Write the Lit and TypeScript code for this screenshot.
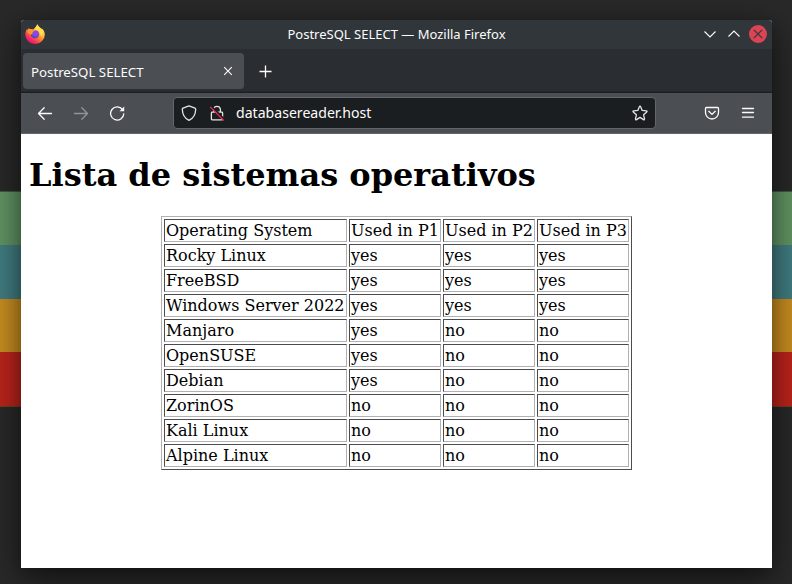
import { LitElement, html, css } from "lit";
import { customElement } from "lit/decorators.js";

const HEAD = ["Operating System", "Used in P1", "Used in P2", "Used in P3"];
const ROWS = [
  ["Rocky Linux", "yes", "yes", "yes"],
  ["FreeBSD", "yes", "yes", "yes"],
  ["Windows Server 2022", "yes", "yes", "yes"],
  ["Manjaro", "yes", "no", "no"],
  ["OpenSUSE", "yes", "no", "no"],
  ["Debian", "yes", "no", "no"],
  ["ZorinOS", "no", "no", "no"],
  ["Kali Linux", "no", "no", "no"],
  ["Alpine Linux", "no", "no", "no"],
];

@customElement("title-bar")
class TitleBar extends LitElement {
  static styles = css`
    :host { display: grid; grid-template-columns: 72px 1fr 72px; align-items: center; height: 29px; background: #31363b; color: #fcfcfc; font: 13px/29px "Noto Sans", sans-serif; border-radius: 3px 3px 0 0; }
    svg { display: block; fill: none; }
    .logo { margin: -2px 0 0 4px; }
    .title { text-align: center; white-space: nowrap; }
    .controls { display: flex; gap: 6px; margin: -1px 0 0 1px; }
  `;
  render() {
    return html`
      <svg class="logo" width="20" height="20" viewBox="0 0 20 20">
        <defs>
          <linearGradient id="body" x1=".85" y1=".1" x2=".25" y2=".95">
            <stop offset="0" stop-color="#fff14f" /><stop offset=".35" stop-color="#ffbd3a" />
            <stop offset=".62" stop-color="#ff6a35" /><stop offset=".85" stop-color="#fa2560" /><stop offset="1" stop-color="#e31587" />
          </linearGradient>
          <radialGradient id="globe" cx=".6" cy=".2" r=".8">
            <stop offset="0" stop-color="#b833e1" /><stop offset=".5" stop-color="#7a4fe8" /><stop offset="1" stop-color="#5046b8" />
          </radialGradient>
        </defs>
        <path fill="url(#body)" d="M12.5.2C13 2 14.5 3 15.8 4.3c.5.5.7 1 .8 1.2.1-.4 0-.9 0-1.2 2 1.4 3.2 4 3.2 6.2A9.7 9.5 0 0 1 10 20 9.7 9.5 0 0 1 .3 10.5C.3 8.3 1 6.200 2.100 4.900c0 .6.1 1 .3 1.300.2-1 .8-1.600 1.600-2.300 0 .6.4 1 .8 1.100 1.500-.2 2.500 0 3.500.400C9.500 4.600 11 2.500 12.500.2z" />
        <circle cx="10" cy="10.300" r="4.100" fill="url(#globe)" />
        <path fill="#ff9528" d="M2.400 6.200C4 5 6 5 7.200 5.800c1 .2 1.600.1 2.600.2-.2 1-1.300 1.700-2.200 2-.2.700 0 1.200.3 1.500-.9.100-1.700.5-2.200 1.300L3 9z" />
        <path fill="#ffe04b" d="M12.500.2C13 2 14.500 3 15.800 4.300c2 2 2.300 6 .4 8.700-.3-3.500-1.700-5.800-4-6.800l-2.600-.8C10.300 4 11.400 2 12.500.2z" />
      </svg>
      <div class="title">PostreSQL SELECT — Mozilla Firefox</div>
      <div class="controls">
        <svg width="18" height="18" stroke="#fcfcfc" stroke-width="1.1"><path d="M3.500 6.500L9 12l5.500-5.500" /></svg>
        <svg width="18" height="18" stroke="#fcfcfc" stroke-width="1.1"><path d="M3.500 11.500L9 6l5.500 5.500" /></svg>
        <svg width="18" height="18"><circle cx="9" cy="9" r="9" fill="#da4453" /><path d="M4.800 4.800l8.400 8.400M13.200 4.800l-8.400 8.400" stroke="#31363b" stroke-width="1.100" /></svg>
      </div>`;
  }
}

@customElement("tab-strip")
class TabStrip extends LitElement {
  static styles = css`
    :host { display: flex; align-items: flex-start; box-sizing: border-box; height: 44px; padding: 4px 2px 0; background: #2a2e32; border-bottom: 1px solid #1c1e21; box-shadow: inset 0 -1px #25282c; }
    .tab { display: flex; align-items: center; justify-content: space-between; box-sizing: border-box; width: 221px; height: 36px; padding: 0 11px 0 8px; border-radius: 4px; background: #4b4e53; color: #fcfcfc; font: 13.25px/36px "Noto Sans", sans-serif; white-space: nowrap; }
    svg { display: block; fill: none; stroke: #fcfcfc; }
    .label { margin-top: 1px; }
    .plus { margin: 12px 0 0 15px; }
  `;
  render() {
    return html`
      <div class="tab"><span class="label">PostreSQL SELECT</span>
        <svg width="10" height="10"><path d="M1.200 1.200l7.600 7.600M8.800 1.200l-7.600 7.600" stroke-width="1.100" /></svg>
      </div>
      <svg class="plus" width="13" height="13"><path d="M6.500.500v12M.500 6.500h12" stroke-width="1.300" /></svg>`;
  }
}

@customElement("nav-bar")
class NavBar extends LitElement {
  static styles = css`
    :host { display: flex; align-items: center; box-sizing: border-box; height: 41px; padding: 0 16px; background: #4b4e53; border-bottom: 1px solid #63666a; }
    svg { display: block; flex: none; fill: none; stroke: #fcfcfc; stroke-width: 1.300; stroke-linecap: round; stroke-linejoin: round; }
    .nav { display: flex; gap: 20px; }
    .dim { opacity: .4; }
    .url { display: flex; align-items: center; box-sizing: border-box; width: 483px; height: 32px; margin-left: 48px; padding: 0 7px; border: 1px solid #63676b; border-radius: 4px; background: #1b1e20; color: #fcfcfc; font: 14.1px/30px "Noto Sans", sans-serif; }
    .url svg { stroke: #e4e4e5; }
    .lock { margin: 0 11px 0 12px; }
    .host { flex: 1; margin-top: -1px; }
    .menu { display: flex; gap: 20px; margin-left: 48px; }
  `;
  render() {
    return html`
      <div class="nav">
        <svg width="16" height="16"><path d="M14.500 8.500H1.500M7.200 2.700L1.500 8.500l5.700 5.700" /></svg>
        <svg class="dim" width="16" height="16"><path d="M1.500 8.500h13M8.800 2.700l5.700 5.800-5.700 5.700" /></svg>
        <svg width="16" height="16"><path d="M13.600 4.700A6.600 6.600 0 1 0 14.800 8.800" /><path d="M15.200 1.600V6.300h-4.700z" fill="#fcfcfc" stroke="none" /></svg>
      </div>
      <div class="url">
        <svg width="16" height="16"><path d="M8 .9l6 2.300c.5.200.7.500.7 1C14.600 8.600 13 13 8 15.300 3 13 1.400 8.600 1.300 4.200c0-.5.2-.8.700-1z" /></svg>
        <svg class="lock" width="16" height="16">
          <path d="M4.700 7V4.200a3.400 3.400 0 0 1 6.700 0V7M3.200 7.200h9.600a.8.800 0 0 1 .8.800v6a.8.800 0 0 1-.8.800H3.200a.8.800 0 0 1-.8-.8V8a.8.800 0 0 1 .8-.8z" />
          <path d="M2.300 1.200l12.200 12.200" stroke="#1b1e20" stroke-width="1.800" /><path d="M1.500 2.200l13 13" stroke="#e22850" />
        </svg>
        <span class="host">databasereader.host</span>
        <svg width="16" height="16"><path d="M8 1.200c.3 0 .6.200.7.500l1.500 3.700 4.100.4c.8.100 1 .8.400 1.300l-3.100 2.700.9 4c.2.700-.5 1.200-1.100.8L8 12.400l-3.400 2.200c-.6.400-1.300-.1-1.100-.8l.9-4-3.100-2.700c-.6-.5-.4-1.200.4-1.300l4.100-.4 1.500-3.700c.1-.3.400-.5.700-.5z" /></svg>
      </div>
      <div class="menu">
        <svg width="16" height="16"><path d="M2.500 2.500h11a1 1 0 0 1 1 1v4a6.500 6.500 0 0 1-13 0v-4a1 1 0 0 1 1-1zM4.800 6.300L8 9.400l3.200-3.100" /></svg>
        <svg width="16" height="16"><path d="M2.500 3.500h11M2.500 7.500h11M2.500 12.200h11" /></svg>
      </div>`;
  }
}

@customElement("app-root")
class AppRoot extends LitElement {
  static styles = css`
    :host { display: block; box-sizing: border-box; width: 792px; height: 584px; padding: 20px 20px 16px 21px; overflow: hidden;
      background: linear-gradient(#292929 0 191px, #3f5a41 191px 192px, #629564 192px 245px, #417d82 245px 299px, #c98e20 299px 352px, #bd241c 352px 406px, #704020 406px 407px, #292929 407px); }
    .window { height: 548px; border-radius: 3px 3px 0 0; box-shadow: 0 10px 34px rgba(0,0,0,.6), 0 2px 8px rgba(0,0,0,.1); background: #fff; }
    .page { padding: 23px 8px 0; color: #000; font-family: "DejaVu Serif", serif; }
    h1 { margin: 0 0 22px; font-size: 32px; line-height: 37px; font-weight: bold; white-space: nowrap; }
    table { width: 471px; margin: 0 auto; table-layout: fixed; border-collapse: separate; border-spacing: 2px; border: 1px solid; border-color: #b1b1b3 #4c4c4f #4c4c4f #b1b1b3; font-size: 16px; line-height: 19px; }
    td { box-sizing: border-box; height: 23px; padding: 1px; width: 92px; border: 1px solid; border-color: #4c4c4f #b1b1b3 #b1b1b3 #4c4c4f; white-space: nowrap; }
    td:first-child { width: 183px; }
  `;
  render() {
    return html`<div class="window">
      <title-bar></title-bar>
      <tab-strip></tab-strip>
      <nav-bar></nav-bar>
      <main class="page">
        <h1>Lista de sistemas operativos</h1>
        <table>
          <tbody>
            ${[HEAD, ...ROWS].map((r) => html`<tr>${r.map((c) => html`<td>${c}</td>`)}</tr>`)}
          </tbody>
        </table>
      </main>
    </div>`;
  }
}
